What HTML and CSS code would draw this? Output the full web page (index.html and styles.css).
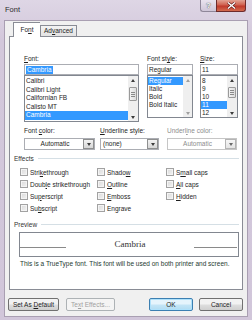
FILE: index.html
```html
<!DOCTYPE html>
<html lang="en">
<head>
<meta charset="UTF-8">
<title>Font</title>
<link rel="stylesheet" href="styles.css">
</head>
<body>
<div class="window">
    <div class="titlebar">
        <span class="title">Font</span>
        <div class="caption">
            <span class="cap-help">?</span>
            <span class="cap-close">
                <svg width="9" height="7" viewBox="0 0 9 7"><path d="M1 0.5 L8 6.5 M8 0.5 L1 6.5" stroke="#5a1a1a" stroke-width="2.6"/><path d="M1 0.5 L8 6.5 M8 0.5 L1 6.5" stroke="#fff" stroke-width="1.4"/></svg>
            </span>
        </div>
    </div>

    <div class="client">
        <div class="tabs">
            <span class="tab active">Fo<u>n</u>t</span>
            <span class="tab">Ad<u>v</u>anced</span>
        </div>

        <div class="panel">
            <!-- font / style / size -->
            <div class="font-row">
                <div class="col col-font">
                    <div class="label"><u>F</u>ont:</div>
                    <div class="field"><span class="hl">Cambria</span></div>
                    <div class="list list-tall">
                        <div class="items">
                            <div class="item">Calibri</div>
                            <div class="item">Calibri Light</div>
                            <div class="item">Californian FB</div>
                            <div class="item">Calisto MT</div>
                            <div class="item selected">Cambria</div>
                        </div>
                        <div class="sb">
                            <span class="sb-btn"><i class="tri-up"></i></span>
                            <span class="sb-track"><span class="sb-thumb thumb-font"><i></i><i></i><i></i></span></span>
                            <span class="sb-btn"><i class="tri-down"></i></span>
                        </div>
                    </div>
                </div>
                <div class="col col-style">
                    <div class="label">Font st<u>y</u>le:</div>
                    <div class="field">Regular</div>
                    <div class="list">
                        <div class="items">
                            <div class="item item-s selected">Regular</div>
                            <div class="item item-s">Italic</div>
                            <div class="item item-s">Bold</div>
                            <div class="item item-s">Bold Italic</div>
                        </div>
                        <div class="sb sb-narrow">
                            <span class="sb-btn"><i class="tri-up"></i></span>
                            <span class="sb-track"></span>
                            <span class="sb-btn"><i class="tri-down"></i></span>
                        </div>
                    </div>
                </div>
                <div class="col col-size">
                    <div class="label"><u>S</u>ize:</div>
                    <div class="field">11</div>
                    <div class="list">
                        <div class="items">
                            <div class="item item-s">8</div>
                            <div class="item item-s">9</div>
                            <div class="item item-s">10</div>
                            <div class="item item-s selected">11</div>
                            <div class="item item-s">12</div>
                        </div>
                        <div class="sb">
                            <span class="sb-btn"><i class="tri-up"></i></span>
                            <span class="sb-track"><span class="sb-thumb thumb-size"><i></i><i></i><i></i></span></span>
                            <span class="sb-btn"><i class="tri-down"></i></span>
                        </div>
                    </div>
                </div>
            </div>

            <!-- colour / underline -->
            <div class="combo-row">
                <div class="col c-color">
                    <div class="label">Font <u>c</u>olor:</div>
                    <div class="combo"><span class="combo-val center">Automatic</span><span class="combo-btn"><i class="tri-down"></i></span></div>
                </div>
                <div class="col c-ustyle">
                    <div class="label"><u>U</u>nderline style:</div>
                    <div class="combo"><span class="combo-val">(none)</span><span class="combo-btn"><i class="tri-down"></i></span></div>
                </div>
                <div class="col c-ucolor disabled">
                    <div class="label">Underl<u>i</u>ne color:</div>
                    <div class="combo"><span class="combo-val center">Automatic</span><span class="combo-btn"><i class="tri-down"></i></span></div>
                </div>
            </div>

            <div class="group">Effects</div>
            <div class="effects">
                <label class="check"><span class="box"></span>Stri<u>k</u>ethrough</label>
                <label class="check"><span class="box"></span>Shado<u>w</u></label>
                <label class="check"><span class="box"></span>S<u>m</u>all caps</label>
                <label class="check"><span class="box"></span>Doub<u>l</u>e strikethrough</label>
                <label class="check"><span class="box"></span><u>O</u>utline</label>
                <label class="check"><span class="box"></span><u>A</u>ll caps</label>
                <label class="check"><span class="box"></span>Su<u>p</u>erscript</label>
                <label class="check"><span class="box"></span><u>E</u>mboss</label>
                <label class="check"><span class="box"></span><u>H</u>idden</label>
                <label class="check"><span class="box"></span>Su<u>b</u>script</label>
                <label class="check"><span class="box"></span>En<u>g</u>rave</label>
            </div>

            <div class="group group-preview">Preview</div>
            <div class="preview">
                <span class="pline pline-left"></span>
                <span class="ptext">Cambria</span>
                <span class="pline pline-right"></span>
            </div>
            <div class="note">This is a TrueType font. This font will be used on both printer and screen.</div>
        </div>

        <div class="buttons">
            <span class="btn btn-wide">Set As <u>D</u>efault</span>
            <span class="btn btn-wide btn-disabled">Te<u>x</u>t Effects...</span>
            <span class="spacer"></span>
            <span class="btn btn-ok">OK</span>
            <span class="btn btn-cancel">Cancel</span>
        </div>
    </div>
</div>
</body>
</html>
```

FILE: styles.css
```css
*{
    margin: 0;
    padding: 0;
    box-sizing: border-box;
}

html, body{
    width: 252px;
    height: 320px;
    overflow: hidden;
}

body{
    font-family: "Liberation Sans", Arial, sans-serif;
    font-size: 6.5px;
    color: #1e1e1e;
    background: #d4c9dc;
}

u{
    text-decoration-thickness: 0.5px;
    text-underline-offset: 1px;
}

/* window frame */
.window{
    width: 252px;
    height: 320px;
    padding: 0 4px 3px 4px;
    background: linear-gradient(#ded6e5, #d3c8db 40px, #d1c6da);
    display: flex;
    flex-direction: column;
}

.titlebar{
    height: 20px;
    display: flex;
    justify-content: space-between;
    align-items: flex-start;
    padding-right: 2px;
}
.title{
    font-size: 7.5px;
    color: #2a2a2a;
    padding: 5px 0 0 1px;
}
.caption{
    display: flex;
}
.cap-help{
    width: 16px;
    height: 12px;
    border: 1px solid #8f8799;
    border-top: none;
    border-right: none;
    border-radius: 0 0 0 3px;
    background: linear-gradient(#e9e3ee, #cfc6d8);
    color: #fff;
    font-size: 8px;
    font-weight: bold;
    text-shadow: 0 0 1px #555, 0 0 1px #555;
    text-align: center;
    line-height: 11px;
}
.cap-close{
    width: 30px;
    height: 12px;
    border: 1px solid #6e2b2b;
    border-top: none;
    border-radius: 0 0 3px 0;
    background: linear-gradient(#e2a293, #d0614f 45%, #c0392b 55%, #d36a4e);
    display: flex;
    align-items: center;
    justify-content: center;
}

/* client area */
.client{
    flex: 1;
    border: 1px solid #a99fb2;
    background: #f0f0f0;
    display: flex;
    flex-direction: column;
}

.tabs{
    height: 15px;
    display: flex;
    align-items: flex-end;
    padding-left: 8px;
}
.tab{
    height: 11px;
    width: 37px;
    border: 1px solid #898c95;
    border-bottom: none;
    background: linear-gradient(#f3f3f3, #e3e3e3);
    text-align: center;
    line-height: 10px;
}
.tab.active{
    width: 27px;
    height: 15px;
    margin-bottom: -1px;
    background: #fff;
    border-right: none;
    position: relative;
    z-index: 1;
    line-height: 13px;
}

.panel{
    height: 254px;
    margin: 0 4px;
    border: 1px solid #898c95;
    background: #fff;
}

/* font / style / size */
.font-row{
    display: flex;
    align-items: flex-start;
    padding: 17px 0 0 14px;
}
.col-style{ margin-left: 8px; }
.col-size{ margin-left: 7px; }
.col-font{ width: 115px; }
.col-style{ width: 46px; }
.col-size{ width: 38px; }

.label{
    height: 10px;
    line-height: 9px;
}
.field{
    height: 11px;
    border: 1px solid #abadb3;
    padding-left: 1px;
    line-height: 9px;
}
.hl{
    background: #3399ff;
    color: #fff;
    padding: 0 1px;
    display: inline-block;
    line-height: 8px;
}

.list{
    height: 43px;
    border: 1px solid #828790;
    display: flex;
    overflow: hidden;
}
.list-tall{
    height: 47px;
}
.items{
    flex: 1;
    padding-top: 1px;
}
.item{
    height: 8.5px;
    line-height: 8.5px;
    padding-left: 1px;
    white-space: nowrap;
}
.item-s{
    height: 8px;
    line-height: 8px;
}
.item.selected{
    background: #3399ff;
    color: #fff;
}

/* scrollbars */
.sb{
    width: 10px;
    background: #efefef;
    display: flex;
    flex-direction: column;
}
.sb-narrow{
    width: 9px;
}
.sb-btn{
    height: 8px;
    display: flex;
    align-items: center;
    justify-content: center;
}
.sb-track{
    flex: 1;
    display: flex;
    flex-direction: column;
    align-items: center;
}
.sb-thumb{
    width: 8px;
    border: 1px solid #9a9a9a;
    border-radius: 1px;
    background: linear-gradient(90deg, #f4f4f4, #dcdcdc);
    display: flex;
    flex-direction: column;
    align-items: center;
    justify-content: center;
    gap: 1px;
}
.sb-thumb i{
    width: 4px;
    height: 1px;
    background: #8a8a8a;
}
.thumb-font{
    margin-top: 3px;
    height: 14px;
}
.thumb-size{
    margin-top: 3px;
    height: 11px;
}
.tri-up, .tri-down{
    width: 0;
    height: 0;
    border-left: 2.5px solid transparent;
    border-right: 2.5px solid transparent;
}
.tri-up{ border-bottom: 3px solid #3c3c3c; }
.tri-down{ border-top: 3px solid #3c3c3c; }
.sb-narrow .tri-up{ border-bottom-color: #a0a0a0; }
.sb-narrow .tri-down{ border-top-color: #a0a0a0; }

/* colour / underline */
.combo-row{
    display: flex;
    padding: 5px 0 0 14px;
}
.combo-row .label{
    height: 11px;
    line-height: 8px;
}
.c-color{ width: 71px; }
.c-ustyle{ width: 59px; margin-left: 5px; }
.c-ucolor{ width: 70px; margin-left: 8px; }
.combo{
    height: 12px;
    border: 1px solid #abadb3;
    background: #fff;
    display: flex;
}
.combo-val{
    flex: 1;
    line-height: 10px;
    padding-left: 2px;
}
.combo-val.center{
    text-align: center;
}
.combo-btn{
    width: 11px;
    border: 1px solid #8e8f8f;
    background: linear-gradient(#f2f2f2, #d6d6d6);
    display: flex;
    align-items: center;
    justify-content: center;
}
.disabled .label,
.disabled .combo-val{
    color: #8d8d8d;
}
.disabled .combo{
    border-color: #c6c6c6;
}
.disabled .combo-btn{
    border-color: #b4b4b4;
    background: linear-gradient(#f6f6f6, #e4e4e4);
}
.disabled .tri-down{
    border-top-color: #6a6a6a;
}

/* group headers */
.group{
    display: flex;
    align-items: center;
    height: 8px;
    margin-top: 4px;
    padding: 0 3px 0 4px;
    color: #333;
}
.group::after{
    content: "";
    flex: 1;
    height: 1px;
    margin-left: 4px;
    background: #d5dfe5;
}
.group-preview{
    margin-top: 6px;
}

.effects{
    display: grid;
    grid-template-columns: 77px 69px auto;
    grid-auto-rows: 12px;
    padding: 4px 0 0 10px;
}
.check{
    display: flex;
    align-items: center;
    white-space: nowrap;
}
.box{
    width: 8px;
    height: 8px;
    border: 1px solid #a2a2a2;
    background: linear-gradient(135deg, #d9d9d9, #f3f3f3);
    box-shadow: inset 0 0 0 1px #f4f4f4;
    margin-right: 2px;
}

.preview{
    height: 25px;
    margin: 4px 3px 0 9px;
    border: 1px solid #828790;
    display: flex;
    align-items: flex-end;
    padding-bottom: 7px;
}
.pline{
    height: 1px;
    margin-bottom: 1px;
    background: #8a8a8a;
}
.pline-left{ width: 46px; }
.pline-right{ width: 43px; margin-right: 1px; }
.ptext{
    flex: 1;
    text-align: center;
    font-family: "Liberation Serif", "Times New Roman", serif;
    font-size: 9px;
    line-height: 9px;
    color: #333;
}

.note{
    margin-top: 3px;
    padding-left: 10px;
    height: 8px;
    line-height: 8px;
    white-space: nowrap;
    color: #253a30;
}

/* bottom buttons */
.buttons{
    display: flex;
    padding: 8px 4px 0 3px;
}
.spacer{ flex: 1; }
.btn{
    height: 13px;
    border: 1px solid #707070;
    border-radius: 2px;
    background: linear-gradient(#f2f2f2 45%, #dddddd 55%, #cfcfcf);
    text-align: center;
    line-height: 11px;
}
.btn-wide{ width: 51px; }
.btn-disabled{
    width: 49px;
    margin-left: 7px;
    border-color: #adb2b5;
    background: #f4f4f4;
    color: #a0a0a0;
}
.btn-ok{
    width: 44px;
    border-color: #3c7fb1;
    background: linear-gradient(#e5f4fc 45%, #c4e5f6 55%, #b0dcf2);
    box-shadow: inset 0 0 0 1px #aee1fb;
}
.btn-cancel{
    width: 44px;
    margin-left: 6px;
}
```
